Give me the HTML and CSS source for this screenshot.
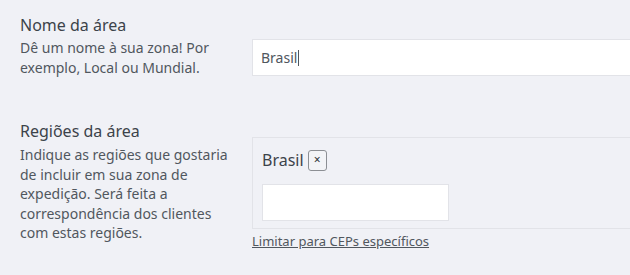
FILE: index.html
```html
<!DOCTYPE html>
<html lang="pt-BR">
<head>
<meta charset="utf-8">
<link rel="stylesheet" href="styles.css">
</head>
<body>
<div class="form">
  <div class="row row-name">
    <div class="info">
      <div class="label">Nome da área</div>
      <div class="desc">Dê um nome à sua zona! Por exemplo, Local ou Mundial.</div>
    </div>
    <div class="field">
      <div class="text-input"><span>Brasil</span><span class="caret"></span></div>
    </div>
  </div>
  <div class="row row-regions">
    <div class="info">
      <div class="label">Regiões da área</div>
      <div class="desc">Indique as regiões que gostaria de incluir em sua zona de expedição. Será feita a correspondência dos clientes com estas regiões.</div>
    </div>
    <div class="field">
      <div class="regions-box">
        <div class="chip"><span class="chip-text">Brasil</span><span class="chip-remove">×</span></div>
        <div class="search-input"></div>
      </div>
      <a class="limit-link" href="#">Limitar para CEPs específicos</a>
    </div>
  </div>
</div>
</body>
</html>
```

FILE: styles.css
```css
html, body {
  margin: 0;
  padding: 0;
  background: #f0f1f6;
  overflow: hidden;
}
body {
  font-family: "Noto Sans", "Open Sans", sans-serif;
  color: #3c434a;
  width: 630px;
  height: 275px;
}
.form {
  padding-top: 14px;
}
.row {
  display: grid;
  grid-template-columns: 252px 1fr;
}
.row-regions {
  margin-top: 42px;
}
.info {
  padding-left: 20px;
}
.label {
  font-size: 16px;
  line-height: 22.4px;
  color: #3c434a;
}
.desc {
  margin-top: 2px;
  font-size: 14px;
  line-height: 19.6px;
  color: #50575e;
  width: 212px;
}
.row-regions .desc {
  margin-top: 3px;
}
.field {
  min-width: 0;
}
.text-input {
  margin-top: 25px;
  width: 400px;
  height: 37px;
  box-sizing: border-box;
  background: #fff;
  border: 1px solid #e2e3e8;
  display: flex;
  align-items: center;
  padding-left: 8px;
  font-size: 14px;
  color: #50575e;
}
.caret {
  display: inline-block;
  width: 1px;
  height: 16px;
  background: #50575e;
  margin-left: 1px;
}
.regions-box {
  margin-top: 17px;
  width: 400px;
  box-sizing: border-box;
  border: 1px solid #e2e3e8;
  padding: 12px 0 7px 9px;
}
.chip {
  display: flex;
  align-items: center;
  height: 21px;
  gap: 4px;
}
.chip-text {
  font-size: 16px;
  line-height: 21px;
  color: #3c434a;
}
.chip-remove {
  width: 19px;
  height: 21px;
  box-sizing: border-box;
  border: 1px solid #8c8f94;
  border-radius: 3px;
  background: #f3f4f7;
  display: flex;
  align-items: center;
  justify-content: center;
  font-size: 12px;
  line-height: 1;
  color: #2c3338;
}
.search-input {
  margin-top: 13px;
  width: 187px;
  height: 37px;
  box-sizing: border-box;
  background: #fff;
  border: 1px solid #e2e3e8;
}
.limit-link {
  display: inline-block;
  margin-top: 2px;
  font-size: 13px;
  line-height: 18.2px;
  color: #50575e;
  text-decoration: underline;
}
```
